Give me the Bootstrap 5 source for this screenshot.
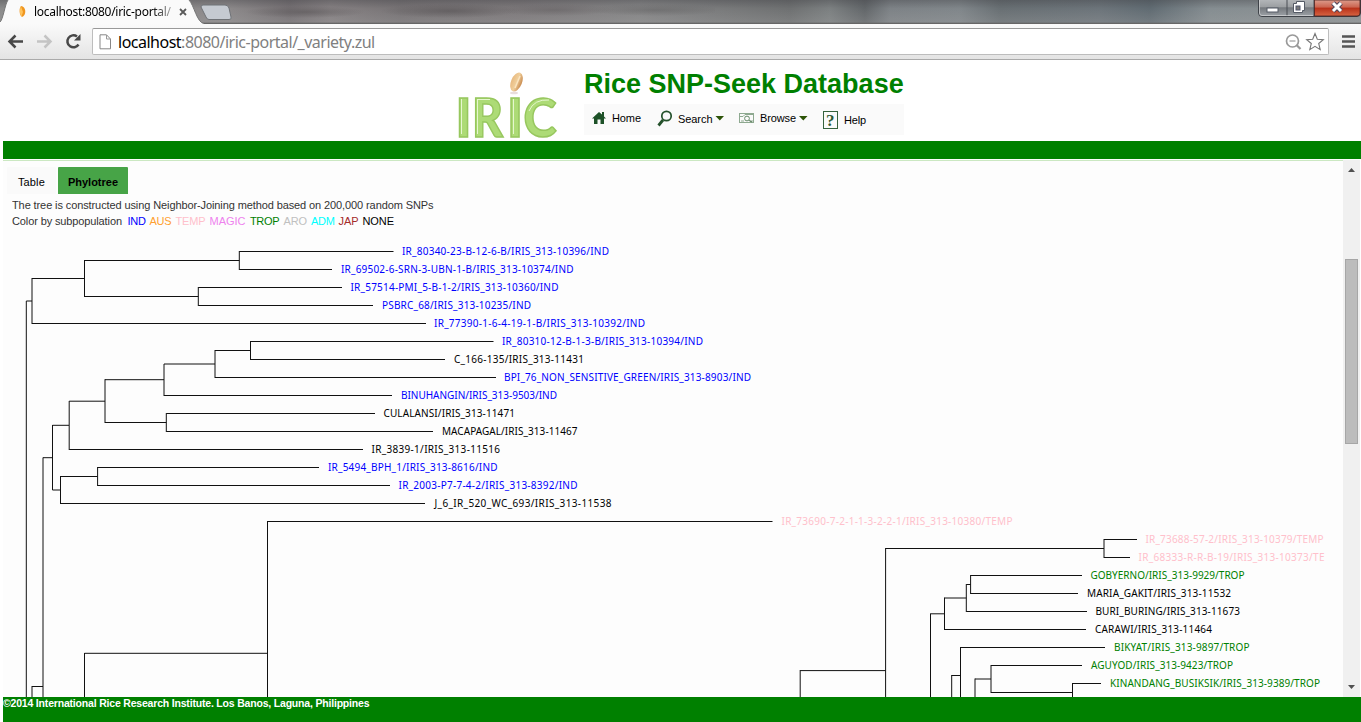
<!DOCTYPE html>
<html lang="en">
<head>
<meta charset="utf-8">
<title>Rice SNP-Seek Database</title>
<link rel="stylesheet" href="https://cdn.jsdelivr.net/npm/bootstrap@5.3.0/dist/css/bootstrap.min.css">
<script src="https://cdn.jsdelivr.net/npm/bootstrap@5.3.0/dist/js/bootstrap.bundle.min.js"></script>
<style>
body{width:1361px;height:722px;font:11px/16px "Liberation Sans",sans-serif;color:#000;background:#fff}
svg{display:block;flex:none}
.titlebar{height:24px;background:
 linear-gradient(180deg,rgba(60,60,65,.35),transparent 35%,rgba(170,170,170,.25) 92%,#666 97%),
 linear-gradient(90deg,#8b8b8b 0,#8b8889 230px,#757073 290px,#858082 330px,#777375 400px,#7d797b 520px,#858586 640px,#6e7071 790px,#7c8081 830px,#626669 865px,#7d8286 890px,#80868a 960px,#686f73 1000px,#6c747a 1100px,#606b72 1150px,#858d91 1210px,#8d9294 1361px)}
.blurtext{width:490px;left:225px;top:1px;height:21px;overflow:hidden;background:radial-gradient(ellipse 60px 6px at 80px 11px,#5a565899,transparent),radial-gradient(ellipse 70px 7px at 225px 10px,#55515399,transparent),radial-gradient(ellipse 60px 6px at 330px 9px,#605c5e80,transparent),radial-gradient(ellipse 70px 6px at 430px 9px,#5f5e5f80,transparent)}
.tabshape{left:0;top:0}
.tabtitle{left:34px;top:3px;font:12px/17px "Noto Sans",sans-serif;letter-spacing:-.3px;-webkit-mask-image:linear-gradient(90deg,#000 118px,rgba(0,0,0,.35) 137px)}
.toolbar{height:36px;background:linear-gradient(#fafafa,#e4e4e4);border-bottom:1px solid #aaa;padding:4px 5px 0 7px}
.omnibox{width:1237px;height:27px;margin-left:10px;border:1px solid #bdbdbd;border-top-color:#999;border-radius:2px;background:#fff;padding-left:6px;padding-right:3px}
.address{font:16px/24px "Noto Sans",sans-serif;letter-spacing:-.5px;color:#808080;margin-left:6px}
.winbtns{left:1257px;top:0}
.page-head{height:81px;margin-left:3px}
.site-title{font:bold 27px/34px "Liberation Sans",sans-serif;color:green;margin:0;white-space:nowrap;width:330px}
.logo-box{width:112px;margin-left:449px}
.head-text{margin-left:20px;padding-top:7px}
.menu-strip{width:320px;height:31px;background:#fafafa;margin-top:3px}
.greenband{height:18px;margin-left:3px;background:green}
.workspace{height:537px;margin:1px 1px 0 3px}
.pane{width:1340px;background:#fdfdfd;border-top:1px solid #cbe8c2;height:537px;overflow:hidden}
.tabrow{padding:6px 0 0 4px;height:33px}
.tab-plain,.tab-active{height:27px;line-height:30px;border-radius:1px 1px 0 0}
.tab-plain{width:49px;background:#fafafa;padding-left:11px;margin-right:2px;letter-spacing:.12px}
.tab-active{width:70px;background:#47a447;font-weight:bold;text-align:center}
.notes{color:#333;padding:3px 0 0 9px;white-space:nowrap;height:33px}
.vscroll{width:17px;background:#f0f0f0}
.thumb{width:13px;height:185px;background:#bcbcbc;border:1px solid #a6a6a6;margin-top:87px}
.foot{height:25px;margin-left:3px;background:green;color:#fff;font-weight:bold;font-size:10.5px;letter-spacing:-.19px;line-height:13px}
.tree text{font-family:"Noto Sans",sans-serif;font-size:10px}
.ind{fill:#00f}.temp{fill:#ffc0cb}.trop{fill:green}
</style>
</head>
<body class="overflow-hidden">
<div class="titlebar position-relative">
  <div class="blurtext position-absolute"></div>
  <svg class="tabshape position-absolute" width="240" height="24" viewBox="0 0 240 24">
    <path d="M0 24V22C3 20 5 4 8 0H189C194 5 197 23 204 23.500V24Z" fill="#fafafa"/>
    <path d="M0 22C3 20 5 4 8 0M189 0C194 5 197 23 204 23.500" fill="none" stroke="#777"/>
    <path d="M203 5H225Q228 5 229 8L231 17Q232 19.500 229 19.500H209Q207 19.500 206 17L201 7Q201 5 203 5Z" fill="#c5cad1" stroke="#6f7276" stroke-width="1"/>
    <path d="M21 6C26 6 27 15 22 17C19 15 19 8 21 6Z" fill="#f0961e"/><path d="M21 6.500C19.500 9 19.500 14 21.500 16.500L23 12Z" fill="#ffc35c"/>
    <path d="M180 9L186 15M186 9L180 15" stroke="#5a5a5a" stroke-width="1.800"/>
  </svg>
  <span class="tabtitle position-absolute text-nowrap">localhost:8080/iric-portal/</span>
  <svg class="winbtns position-absolute" width="104" height="18" viewBox="0 0 104 18">
    <defs><linearGradient id="wg" x2="0" y2="1"><stop stop-color="#b5b8bb"/><stop offset=".45" stop-color="#9c9fa2"/><stop offset=".5" stop-color="#75797e"/><stop offset="1" stop-color="#9ea3a8"/></linearGradient>
    <linearGradient id="wr" x2="0" y2="1"><stop stop-color="#dc9c8c"/><stop offset=".45" stop-color="#cb6450"/><stop offset=".5" stop-color="#b83019"/><stop offset="1" stop-color="#d76442"/></linearGradient></defs>
    <path d="M1.500-1V13Q1.500 16.500 5 16.500H100Q103.500 16.500 103.500 13V-1" fill="url(#wg)" stroke="#3f4349"/>
    <path d="M30 0V16M57 0V16" stroke="#4b4f55"/><path d="M2.500 0V13Q2.500 15.500 5 15.500H56" fill="none" stroke="#d5d7d9" stroke-opacity=".7"/>
    <path d="M57.500 0H103V13Q103 16 100 16H57.500Z" fill="url(#wr)" stroke="#4a2020" stroke-width=".8"/>
    <rect x="10" y="8" width="11" height="4" fill="#fff" stroke="#555b66"/>
    <path d="M39.500 1.500H47.500V10.500H45.500V12.500H36.500V3.500H39.500Z" fill="#fff" stroke="#555b66"/><rect x="39" y="6" width="4" height="4" fill="#777" stroke="#50566c"/>
    <path d="M76 3L84 11M84 3L76 11" stroke="#50455a" stroke-width="5"/><path d="M76 3L84 11M84 3L76 11" stroke="#fff" stroke-width="3"/>
  </svg>
</div>
<div class="toolbar d-flex align-items-start">
  <svg width="75" height="27" viewBox="7 28 75 27" fill="none">
    <path d="M23 41.500H10M15.500 35.500L9.500 41.500L15.500 47.500" stroke="#484848" stroke-width="2.500"/>
    <path d="M37 41.500H50M44.500 35.500L50.500 41.500L44.500 47.500" stroke="#c4c4c4" stroke-width="2.500"/>
    <path d="M78.500 44.500A6 6 0 1 1 77 36.500" stroke="#484848" stroke-width="2.500"/><path d="M80.500 34V40.500H74Z" fill="#484848"/>
  </svg>
  <div class="omnibox d-flex align-items-center">
    <svg width="13" height="16" viewBox="0 0 13 16"><path d="M1 .8H7.500L11.500 5V14.800H1Z" fill="#fff" stroke="#888"/><path d="M7.500 1V5H11.500" fill="none" stroke="#999"/></svg>
    <span class="address"><span class="text-black">localhost</span>:8080/iric-portal/_variety.zul</span>
    <svg class="ms-auto" width="40" height="22" viewBox="0 0 40 22" fill="none">
      <circle cx="7.500" cy="10" r="6" stroke="#999" stroke-width="1.700"/><path d="M4.500 10H10.500" stroke="#888"/><path d="M11.500 14L15.500 18" stroke="#999" stroke-width="2.300"/>
      <path d="M30 2.500L32.300 8.300L38.300 8.700L33.700 12.500L35.200 18.600L30 15.300L24.800 18.600L26.300 12.500L21.700 8.700L27.700 8.300Z" stroke="#777" stroke-width="1.100"/>
    </svg>
  </div>
  <svg class="ms-auto" width="14" height="27" viewBox="0 0 14 27"><path d="M0 8.500H13M0 13.500H13M0 18.500H13" stroke="#555" stroke-width="2.600"/></svg>
</div>
<header class="page-head d-flex">
  <div class="logo-box">
    <svg width="112" height="81" viewBox="452 60 112 81" overflow="visible">
      <defs><linearGradient id="grain"><stop stop-color="#e8ba80"/><stop offset=".5" stop-color="#f0cf9c"/><stop offset="1" stop-color="#c98b4f"/></linearGradient></defs>
      <g font-family="Lato,sans-serif" font-weight="900" font-size="53" fill="#addb76">
        <g stroke="#97c75e" stroke-width="1.500"><text x="455.500" y="136.500">I</text><text x="472" y="136.500" textLength="31" lengthAdjust="spacingAndGlyphs">R</text><text x="507" y="136.500">I</text><text x="523.500" y="136.500" textLength="33" lengthAdjust="spacingAndGlyphs">C</text></g>
      </g>
      <path d="M461.500 99V134M477.500 99V134M513.500 99V134M478 99.500H490M529 111Q534 99 549 100" fill="none" stroke="#e6f7cf" stroke-width="1"/>
      <ellipse cx="516.500" cy="82" rx="5.500" ry="10" transform="rotate(22 516.500 82)" fill="url(#grain)"/>
      <path d="M515 88L520 76" stroke="#fbe5c0" stroke-width="1.500"/><ellipse cx="514" cy="93" rx="4" ry="1.300" fill="#e8dddd"/>
    </svg>
  </div>
  <div class="head-text d-flex flex-column">
    <h1 class="site-title">Rice SNP-Seek Database</h1>
    <nav class="menu-strip d-flex">
      <svg width="320" height="31" viewBox="584 104 320 31" fill="none">
        <path d="M592 118.500L599 112L602 114.500V112H604V116.500L606 118.500H604V124H600.500V119.500H597.500V124H594V118.500Z" fill="#1d5127"/>
        <circle cx="666.500" cy="116" r="4.700" stroke="#24512b" stroke-width="1.700"/><path d="M663 120L658.500 125.500" stroke="#24512b" stroke-width="2.800"/>
        <path d="M715.500 116H724L719.800 120.500ZM799 116H807.500L803.300 120.500Z" fill="#2d5408"/>
        <rect x="739.500" y="113.500" width="14" height="9" stroke="#8ea990"/><path d="M740 116.500H743L745 114.500H753M741 121H744M750 121H753" stroke="#8ea990"/><circle cx="747" cy="118.500" r="2.400" stroke="#688b6b"/><path d="M749 120.500L752 122" stroke="#507553"/>
        <rect x="823.500" y="111.500" width="14" height="17" stroke="#35623c"/>
        <text x="826" y="126" font-family="Liberation Serif" font-weight="bold" font-size="17" fill="#2c5934">?</text>
        <g font-family="Liberation Sans" font-size="11" fill="#000">
          <text x="612" y="122" textLength="29">Home</text><text x="678" y="123" textLength="34.500">Search</text>
          <text x="760" y="122" textLength="36">Browse</text><text x="844" y="124" textLength="22">Help</text>
        </g>
      </svg>
    </nav>
  </div>
</header>
<div class="greenband"></div>
<main class="workspace d-flex">
  <section class="pane">
    <div class="tabrow d-flex"><div class="tab-plain">Table</div><div class="tab-active">Phylotree</div></div>
    <div class="notes">
      <svg width="440" height="32" viewBox="12 197 440 32" font-family="Liberation Sans" font-size="11" fill="#333">
        <text x="12" y="209" textLength="421.500">The tree is constructed using Neighbor-Joining method based on 200,000 random SNPs</text>
        <text x="12" y="225" textLength="110">Color by subpopulation</text>
        <text x="127.500" y="225" textLength="18.500" fill="#00f">IND</text><text x="149.500" y="225" textLength="22" fill="#ffa030">AUS</text>
        <text x="175.500" y="225" textLength="30" fill="#ffc0cb">TEMP</text><text x="209.500" y="225" textLength="36" fill="#ee82ee">MAGIC</text>
        <text x="250" y="225" textLength="29.500" fill="green">TROP</text><text x="283.500" y="225" textLength="23.500" fill="#c0c0c0">ARO</text>
        <text x="311" y="225" textLength="24" fill="#0ff">ADM</text><text x="338.500" y="225" textLength="20" fill="#a52a2a">JAP</text><text x="362.500" y="225" textLength="31.500" fill="#000">NONE</text>
      </svg>
    </div>
    <svg class="tree" width="1340" height="470" viewBox="3 227 1340 470">
      <path fill="none" stroke="#111" d="M239.300 251.500H393.500M239.300 269.500H332M239.300 251V270M84.500 260.500H239.300M84.500 260V297M84.500 296.500H198.300M198.300 287V306M198.300 287.500H342M198.300 305.500H373M32 278.500H84.500M32 278V324M32 323.500H426M26.300 301H32M26.300 301V697
      M250.500 341.500H493.500M250.500 359.500H445M250.500 341V360M215 350.500H250.500M215 350V378M215 377.500H496M164 364H215M164 364V396M164 395.500H392M105 379.700H164M105 379.200V423M105 422.500H166.300M166.300 413V432M166.300 413.500H375M166.300 431.500H433M69.200 401.200H105M69.200 401V450M69.200 449.500H363M52.500 425.300H69M52.500 425V490M43 457.700H52.500M43 457.500V697M32 686.500H43M32 686V697
      M52.500 490H60.500M60.500 476V504M60.500 476.500H97.600M97.600 467V486M97.600 467.500H319M97.600 485.500H390M60.500 503.500H425M267.500 521.500H772.500M267.500 521V697M84.500 653.300H267.500M84.500 653V697
      M1104 539.500H1137M1104 557.500H1130M1104 539V558M885.600 548.500H1104M885.600 548V697M800.200 670.600H885.600M800.200 670V697
      M970.600 575.500H1082M970.600 593.500H1078M970.600 575V594M966.300 584.500H970.600M966.300 584V612M966.300 611.500H1087M944.500 598H966.300M944.500 597.500V630M944.500 629.500H1086M930.500 613.800H944.500M930.500 613.500V697
      M960.500 647.500H1105M960.500 647V697M951.700 675.500H960.500M951.700 675V697M991 665.500H1082M991 665V693M991 692.500H1072.500M975 679H991M975 678.500V697M1072.500 683V697M1072.500 683.500H1101"/>
      <g class="ind">
        <text x="402" y="255" textLength="207">IR_80340-23-B-12-6-B/IRIS_313-10396/IND</text>
        <text x="341" y="273" textLength="232.500">IR_69502-6-SRN-3-UBN-1-B/IRIS_313-10374/IND</text>
        <text x="350.500" y="291" textLength="208">IR_57514-PMI_5-B-1-2/IRIS_313-10360/IND</text>
        <text x="382" y="309" textLength="149">PSBRC_68/IRIS_313-10235/IND</text>
        <text x="434" y="327" textLength="211">IR_77390-1-6-4-19-1-B/IRIS_313-10392/IND</text>
        <text x="502" y="345" textLength="201">IR_80310-12-B-1-3-B/IRIS_313-10394/IND</text>
        <text x="504" y="381" textLength="247">BPI_76_NON_SENSITIVE_GREEN/IRIS_313-8903/IND</text>
        <text x="401" y="399" textLength="156">BINUHANGIN/IRIS_313-9503/IND</text>
        <text x="328" y="471" textLength="169.500">IR_5494_BPH_1/IRIS_313-8616/IND</text>
        <text x="398.500" y="489" textLength="179">IR_2003-P7-7-4-2/IRIS_313-8392/IND</text>
      </g>
      <g fill="#000">
        <text x="454" y="363" textLength="130">C_166-135/IRIS_313-11431</text>
        <text x="383.500" y="417" textLength="131.500">CULALANSI/IRIS_313-11471</text>
        <text x="442" y="435" textLength="135.500">MACAPAGAL/IRIS_313-11467</text>
        <text x="371.500" y="453" textLength="128.500">IR_3839-1/IRIS_313-11516</text>
        <text x="434.500" y="507" textLength="177">J_6_IR_520_WC_693/IRIS_313-11538</text>
        <text x="1087" y="597" textLength="144">MARIA_GAKIT/IRIS_313-11532</text>
        <text x="1095.500" y="615" textLength="144.500">BURI_BURING/IRIS_313-11673</text>
        <text x="1095" y="633" textLength="117">CARAWI/IRIS_313-11464</text>
      </g>
      <g class="temp">
        <text x="781.500" y="525" textLength="231">IR_73690-7-2-1-1-3-2-2-1/IRIS_313-10380/TEMP</text>
        <text x="1145.500" y="543" textLength="178">IR_73688-57-2/IRIS_313-10379/TEMP</text>
        <text x="1138.500" y="561" textLength="186">IR_68333-R-R-B-19/IRIS_313-10373/TE</text>
      </g>
      <g class="trop">
        <text x="1090.500" y="579" textLength="154">GOBYERNO/IRIS_313-9929/TROP</text>
        <text x="1114" y="651" textLength="135.500">BIKYAT/IRIS_313-9897/TROP</text>
        <text x="1091" y="669" textLength="142">AGUYOD/IRIS_313-9423/TROP</text>
        <text x="1110" y="687" textLength="210">KINANDANG_BUSIKSIK/IRIS_313-9389/TROP</text>
      </g>
    </svg>
  </section>
  <div class="vscroll d-flex flex-column align-items-center pt-2">
    <svg width="7" height="4" viewBox="0 0 7 4"><path d="M0 4L3.500 0L7 4Z" fill="#505050"/></svg>
    <div class="thumb"></div>
    <svg class="mt-auto mb-2" width="7" height="4" viewBox="0 0 7 4"><path d="M0 0L3.500 4L7 0Z" fill="#505050"/></svg>
  </div>
</main>
<footer class="foot">©2014 International Rice Research Institute. Los Banos, Laguna, Philippines</footer>
</body>
</html>
